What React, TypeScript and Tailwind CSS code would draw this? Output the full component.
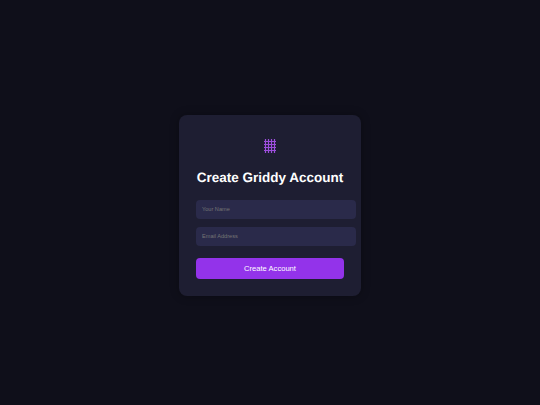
export default function App() {
  return (
    <div className="flex min-h-[405px] w-[540px] items-center justify-center bg-[#0f0f1a] pt-[6px] font-['Liberation_Sans',sans-serif] [text-rendering:geometricPrecision]">
      <div className="flex h-[181px] w-[182px] flex-col rounded-[8px] bg-[#1e1e32] px-[17px] pt-[21px] shadow-[0_0_10px_rgba(0,0,0,0.3)]">
        <div className="flex justify-center">
          <svg width="20" height="20" viewBox="0 0 20 20" fill="none" stroke="#9d4edd" strokeWidth="1.2">
            <path d="M5.500 3V17M8.500 3V17M11.500 3V17M14.500 3V17M4 5.500H16M4 8.500H16M4 11.500H16M4 14.500H16" />
          </svg>
        </div>
        <h1 className="mt-[13px] text-center text-[13.500px] leading-[18px] font-bold whitespace-nowrap text-white">Create Griddy Account</h1>
        <input
          placeholder="Your Name"
          className="mt-[13px] h-[19px] w-[160px] shrink-0 rounded-[4px] bg-[#2a2a4a] px-[6px] pb-[1px] text-[5.600px] text-white outline-none placeholder:text-[#757575]"
        />
        <input
          placeholder="Email Address"
          className="mt-[8px] h-[19px] w-[160px] shrink-0 rounded-[4px] bg-[#2a2a4a] px-[6px] pb-[1px] text-[5.600px] text-white outline-none placeholder:text-[#757575]"
        />
        <button className="mt-[12px] h-[21px] w-[148px] shrink-0 rounded-[4px] bg-[#9333ea] text-[7.600px] text-white">Create Account</button>
      </div>
    </div>
  );
}
